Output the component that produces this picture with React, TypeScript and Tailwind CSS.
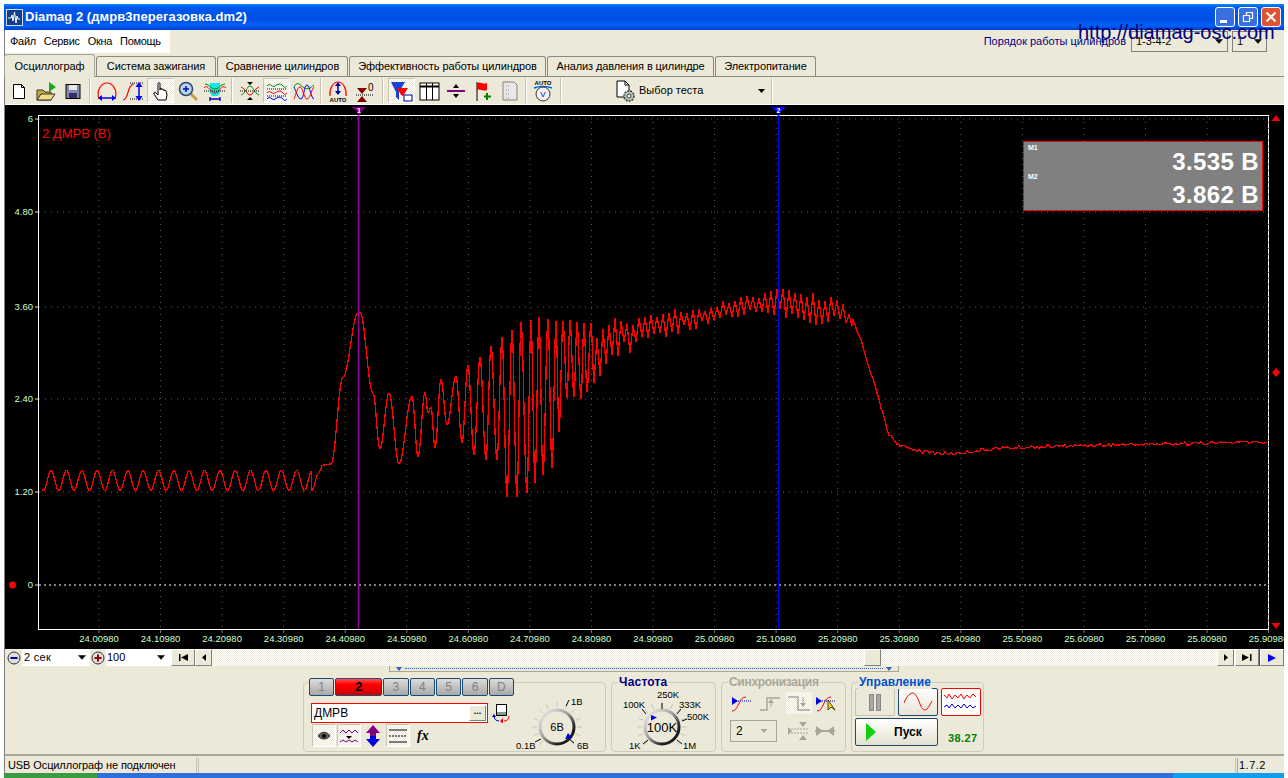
import React from 'react'

const tabs = ['Система зажигания', 'Сравнение цилиндров', 'Эффективность работы цилиндров', 'Анализ давления в цилиндре', 'Электропитание']
const tabWidths = ['w-[120px]', 'w-[131px]', 'w-[197px]', 'w-[167px]', 'w-[101px]']

// waveform extrema read off the screenshot, cosine-interpolated between them
const extrema: [number, number][] = [
  [312, 491], [318, 474], [323, 465], [331, 464], [343, 377], [358, 313], [360, 312], [373, 393], [380, 449], [389, 393], [399, 464], [412, 396],
  [418, 457], [425, 392], [428, 413], [431, 407], [435, 448], [441, 379], [447, 425], [456, 376], [462, 443], [468, 365],
  [474, 455], [480, 357], [486, 460], [491, 346], [497, 460], [502, 337], [507, 497], [512, 330], [517, 497], [521, 322],
  [527, 493], [531, 320], [535, 483], [539, 317], [543, 475], [548, 319], [552, 468], [556, 321], [559, 432], [563, 321],
  [567, 398], [570, 320], [574, 397], [577, 322], [581, 399], [584, 323], [587, 392], [591, 323], [594, 382],
]

const lerpTable = (table: [number, number][], x: number) => {
  for (let i = 1; i < table.length; i++) {
    if (x <= table[i][0]) {
      const [x0, y0] = table[i - 1]
      const [x1, y1] = table[i]
      return y0 + ((y1 - y0) * (x - x0)) / (x1 - x0)
    }
  }
  return table[table.length - 1][1]
}

const upper: [number, number][] = [[594, 323], [623, 313], [657, 312], [690, 307], [723, 300], [757, 293], [778, 288], [807, 292], [840, 298], [853, 320]]
const lower: [number, number][] = [[594, 383], [607, 370], [623, 357], [633, 355], [657, 340], [690, 333], [707, 328], [723, 320], [757, 315], [778, 317], [797, 322], [817, 327], [840, 320], [853, 328]]
const tail: [number, number][] = [[853, 320], [860, 337], [873, 380], [880, 403], [888, 433], [900, 446], [925, 452], [950, 454], [1000, 448], [1100, 445], [1268, 442]]

const noise = (i: number) => {
  const v = Math.sin(i * 12.9898) * 43758.5453
  return v - Math.floor(v)
}

const buildWave = () => {
  const pts: string[] = []
  for (let x = 42; x < 312; x += 1) {
    const y = 480.5 + 10 * Math.sin(((x - 42) / 15.35) * 2 * Math.PI + 1)
    pts.push(`${x},${y.toFixed(1)}`)
  }
  for (let i = 1; i < extrema.length; i++) {
    const [x0, y0] = extrema[i - 1]
    const [x1, y1] = extrema[i]
    for (let s = 0; s < x1 - x0; s++) {
      const t = s / (x1 - x0)
      const y = y0 + ((y1 - y0) * (1 - Math.cos(Math.PI * t))) / 2
      pts.push(`${x0 + s},${y.toFixed(1)}`)
    }
  }
  let flip = false
  let i = 0
  for (let x = 594; x < 853; x += 3) {
    const up = lerpTable(upper, x)
    const lo = lerpTable(lower, x)
    const r = noise(i++)
    const y = flip ? up + r * (lo - up) * 0.3 : lo - r * (lo - up) * 0.35
    pts.push(`${x},${y.toFixed(1)}`)
    flip = !flip
  }
  for (let x = 853; x < 1268; x += 2) {
    pts.push(`${x},${(lerpTable(tail, x) + (noise(i++) - 0.5) * 3.5).toFixed(1)}`)
  }
  return pts.join(' ')
}

const wave = buildWave()
const xTicks = Array.from({ length: 20 }, (_, k) => ({ x: 99 + 61.56 * k, label: (24.0098 + 0.1 * k).toFixed(5) }))
const yTicks = [{ y: 119, t: '6' }, { y: 212, t: '4.80' }, { y: 307, t: '3.60' }, { y: 399, t: '2.40' }, { y: 492, t: '1.20' }, { y: 585, t: '0' }]

function Scope() {
  return (
    <div className="relative h-[544px] bg-black overflow-hidden">
      <svg viewBox="5 105 1279 544" width={1279} height={544} className="block" style={{ fontFamily: '"Liberation Sans", sans-serif' }}>
        <rect x="38.5" y="115.5" width="1230" height="514" fill="none" stroke="#fff" />
        {yTicks.slice(1, 5).map((t) => (
          <line key={t.y} x1="39" x2="1268" y1={t.y} y2={t.y} stroke="#5c5c5c" strokeDasharray="1 5" />
        ))}
        <line x1="39" x2="1268" y1="119" y2="119" stroke="#5c5c5c" strokeDasharray="1 5" />
        {xTicks.map((t) => (
          <g key={t.label}>
            <line x1={t.x} x2={t.x} y1="116" y2="629" stroke="#5c5c5c" strokeDasharray="1 5" />
            <line x1={t.x} x2={t.x} y1="630" y2="633" stroke="#777" />
            <text x={t.x} y="642" textAnchor="middle" fontSize="9.5" fill="#ccffcc">{t.label}</text>
          </g>
        ))}
        {yTicks.map((t) => (
          <g key={t.y}>
            <text x="33" y={t.y + 3} textAnchor="end" fontSize="9.5" fill="#ccffcc">{t.t}</text>
            <line x1="35" x2="38" y1={t.y} y2={t.y} stroke="#ddd" />
          </g>
        ))}
        <line x1="39" x2="1268" y1="585" y2="585" stroke="#fff" strokeDasharray="2 3" />
        <circle cx="12.5" cy="585" r="3.5" fill="#ff0000" />
        <polyline points={wave} fill="none" stroke="#ff0000" strokeWidth="1.3" strokeLinejoin="bevel" shapeRendering="crispEdges" />
        <line x1="358.5" x2="358.5" y1="113" y2="629" stroke="#990099" strokeWidth="1.5" />
        <line x1="778.5" x2="778.5" y1="113" y2="629" stroke="#0000ff" strokeWidth="1.5" />
        <path d="M352 107h14l-7 7z" fill="#800080" />
        <text x="359" y="113" textAnchor="middle" fontSize="7" fontWeight="700" fill="#fff">1</text>
        <path d="M771 107h15l-7.5 7z" fill="#0000ff" />
        <text x="778.5" y="113" textAnchor="middle" fontSize="7" fontWeight="700" fill="#fff">2</text>
        <path d="M1276 115l4.5 6h-9z" fill="#ff0000" />
        <path d="M1276 368l4 4.5-4 4.5-4-4.5z" fill="#ff0000" />
        <path d="M1276 629l4.5-6h-9z" fill="#ff0000" />
        <text x="42" y="138" fontSize="13" fill="#ff0000">2 ДМРВ (В)</text>
      </svg>
      <div className="absolute left-[1018px] top-[36px] w-[240px] h-[70px] bg-[#808080] border border-[#ff0000] text-white font-['Liberation_Sans',sans-serif] pl-[4px] pr-[3px]">
        <div className="text-[7px] leading-[8px] font-bold mt-[2px]">M1</div>
        <div className="text-[24px] leading-[26px] text-right font-bold tracking-[0.4px] -mt-[3px]">3.535 В</div>
        <div className="text-[7px] leading-[8px] font-bold -mt-[2px]">M2</div>
        <div className="text-[24px] leading-[26px] text-right font-bold tracking-[0.4px] mt-[1px]">3.862 В</div>
      </div>
    </div>
  )
}

function Tool({ pressed, children }: { pressed?: boolean; children: React.ReactNode }) {
  return (
    <div className={`w-[27px] h-[25px] flex items-center justify-center ${pressed ? "bg-[repeating-conic-gradient(#ece9d8_0_25%,#ffffff_0_50%)] bg-[length:2px_2px] border border-t-[#c8c5b4] border-l-[#c8c5b4] border-r-white border-b-white" : ''}`}>
      {children}
    </div>
  )
}

function Sep({ className }: { className: string }) {
  return (
    <div className={`${className} h-[25px] flex justify-center`}>
      <div className="w-[2px] h-full bg-[#c5c2b2] border-r border-white" />
    </div>
  )
}

const Ico = ({ children, w = 24, h = 24 }: { children: React.ReactNode; w?: number; h?: number }) => (
  <svg viewBox={`0 0 ${w} ${h}`} width={w} height={h} fill="none" className="block shrink-0">{children}</svg>
)

function Toolbar() {
  return (
    <div className="h-[27px] flex items-center bg-[#ece9d8] font-['Liberation_Sans',sans-serif]">
      <Tool>
        <Ico><path d="M6.5 5.500h8l3 3v11h-11z" fill="#fff" stroke="#000" /><path d="M14.5 5.500v3h3" stroke="#000" /></Ico>
      </Tool>
      <Tool>
        <Ico><path d="M3 21V11h6l2 2h6v8z" fill="#c8a83a" stroke="#333" /><path d="M3 21l4-6h14l-4 6z" fill="#f4dc80" stroke="#333" /><path d="M15 3v10l7-5z" fill="#18a820" /></Ico>
      </Tool>
      <Tool>
        <Ico><rect x="5" y="5.500" width="14" height="14" fill="#8a8aa8" stroke="#000" /><rect x="8" y="6" width="8" height="5" fill="#e8e8e8" /><rect x="8" y="14" width="8" height="5" fill="#30306a" /></Ico>
      </Tool>
      <Sep className="w-[7px]" />
      <Tool>
        <Ico><path d="M4 20C1 12 6 4 12 4s11 8 8 16" stroke="#ff0000" strokeWidth="1.2" /><path d="M5 19h14" stroke="#0000ff" strokeWidth="1.5" /><path d="M3 19l4-3v6zM21 19l-4-3v6z" fill="#0000ff" /></Ico>
      </Tool>
      <Tool>
        <Ico><path d="M1 21c6 0 4-16 11-16" stroke="#ff0000" strokeWidth="1.2" /><path d="M8 4h13M8 20h13" stroke="#000" strokeDasharray="1 1" /><path d="M17 6v14" stroke="#0000ff" strokeWidth="1.5" /><path d="M17 3l-3.5 5h7zM17 22l-3.5-5h7z" fill="#0000ff" /></Ico>
      </Tool>
      <Tool pressed>
        <Ico><path d="M9 21l-4-6c-1-2 1-2 2-1l2 2V5c0-2 2-2 2 0v6-1c0-1 2-1 2 0v1c0-1 2-1 2 0v1c0-1 2-1 2 0l1 4-1 5z" fill="#fff" stroke="#000" /></Ico>
      </Tool>
      <Tool>
        <Ico><path d="M15 15l6 6" stroke="#c8a040" strokeWidth="3" /><circle cx="10" cy="10" r="6.5" fill="#b8d8f0" stroke="#304868" strokeWidth="1.5" /><path d="M7 10h6M10 7v6" stroke="#0000c0" strokeWidth="1.5" /></Ico>
      </Tool>
      <Tool>
        <Ico><path d="M7 4h10v10l-2 3H9l-2-3z" fill="#10e8e8" /><path d="M1 9c4-5 6 5 11 5s6-10 11-5" stroke="#ff0000" /><path d="M2 5c5 0 5 5 10 5s5-5 10-5" stroke="#009000" /><path d="M1 12h22" stroke="#000" strokeDasharray="1 1" /><path d="M7 20h10M7 18v4M17 18v4" stroke="#0000c0" strokeWidth="1.3" /></Ico>
      </Tool>
      <Sep className="w-[8px]" />
      <Tool>
        <Ico><path d="M3 8c5 2 6 8 9 8s4-6 9-8" stroke="#ff0000" /><path d="M3 16c5-2 6-9 9-9s4 7 9 9" stroke="#009000" /><path d="M2 12h20" stroke="#000" strokeDasharray="1 1" /><path d="M12 6l-3-3h6zM12 18l-3 3h6z" fill="#000" /></Ico>
      </Tool>
      <Tool pressed>
        <Ico><path d="M2 7c3-4 5 2 8 0s5-3 8 0 2 1 4 0" stroke="#009000" /><path d="M2 14c3-4 5 2 8 0s5-3 8 0 2 1 4 0" stroke="#ff0000" /><path d="M2 20c3-4 5 2 8 0s5-3 8 0 2 1 4 0" stroke="#0000ff" /><path d="M2 10h20M2 17h20" stroke="#000" strokeDasharray="1 1" /></Ico>
      </Tool>
      <Tool>
        <Ico><path d="M2 8c3-6 5-3 9 0s6 2 11-2" stroke="#009000" /><path d="M2 8c2 4 4 12 7 12s3-14 6-14 4 14 7 14" stroke="#0000ff" /><path d="M2 20c2-4 3-12 6-12s4 12 7 12 4-8 7-12" stroke="#ff0000" /></Ico>
      </Tool>
      <Sep className="w-[7px]" />
      <Tool>
        <Ico><path d="M4 17c-1-7 3-14 8-14s9 7 8 14" stroke="#ff0000" strokeWidth="1.2" /><path d="M12 5v9" stroke="#0000a0" strokeWidth="1.5" /><path d="M12 3l-3 4h6zM12 16l-3-4h6z" fill="#0000a0" /><text x="12" y="23" textAnchor="middle" fontSize="6" fontWeight="700" fill="#000">AUTO</text></Ico>
      </Tool>
      <Tool>
        <Ico><path d="M3 16h18" stroke="#000" strokeDasharray="1 1" /><path d="M9 15l-5-6h10zM9 17l-5 6h10z" fill="#800000" /><text x="15" y="12" fontSize="10" fill="#000">0</text></Ico>
      </Tool>
      <Sep className="w-[10px]" />
      <Tool pressed>
        <Ico><path d="M1 3h14l-6 10v8l-3-3v-5z" fill="#2040d0" /><path d="M7 9h11l-5 8-2-1z" fill="#ff0000" /><rect x="14" y="16" width="8" height="6" fill="#fff" stroke="#0000a0" /></Ico>
      </Tool>
      <Tool>
        <Ico><rect x="3" y="4" width="19" height="17" fill="#fff" stroke="#000" /><path d="M3 7.500h19" stroke="#000" strokeWidth="2" /><path d="M9.500 4v17M15.500 4v17" stroke="#000" /></Ico>
      </Tool>
      <Tool>
        <Ico><path d="M3 12h18" stroke="#800080" strokeWidth="2" /><path d="M12 5l-3 4h6zM12 19l-3-4h6z" fill="#000" /></Ico>
      </Tool>
      <Tool>
        <Ico><path d="M6 3v19" stroke="#000" /><path d="M6 4c3-2 6 2 10 0v7c-4 2-7-2-10 0z" fill="#ff0000" /><path d="M16 14v7M13 17.500h7" stroke="#008000" strokeWidth="2" /></Ico>
      </Tool>
      <Tool>
        <Ico><path d="M5 3h11l3 3v15H5z" fill="#e8e8e8" stroke="#808080" /><path d="M8 7h3M8 11h3M8 15h3M8 19h3" stroke="#909090" strokeDasharray="1 1" /></Ico>
      </Tool>
      <Sep className="w-[6px]" />
      <Tool>
        <Ico><text x="12" y="6" textAnchor="middle" fontSize="6" fontWeight="700" fill="#000">AUTO</text><path d="M3 9c5-2 13-2 18 0" stroke="#0060e0" strokeWidth="1.5" /><circle cx="12" cy="15" r="7" fill="#f0f0f0" stroke="#333" /><text x="12" y="18" textAnchor="middle" fontSize="8" fill="#0000c0">V</text></Ico>
      </Tool>
      <Sep className="w-[10px]" />
      <div className="w-[205px] flex items-center pl-[48px] pr-[6px]">
        <Ico><path d="M3 2h8l4 4v12H3z" fill="#fff" stroke="#000" /><path d="M11 2v4h4" stroke="#000" /><circle cx="15" cy="17" r="5" fill="#b8c8c0" stroke="#304030" strokeWidth="1.5" strokeDasharray="2 1" /><circle cx="15" cy="17" r="2" fill="#fff" stroke="#304030" /></Ico>
        <span className="text-[11px] ml-[1px] text-black">Выбор теста</span>
        <svg viewBox="0 0 7 4" width={7} height={4} className="ml-auto"><path d="M0 0h7L3.500 4z" fill="#000" /></svg>
      </div>
      <Sep className="w-[2px]" />
    </div>
  )
}

function Combo({ w, text }: { w: string; text: string }) {
  return (
    <div className={`${w} h-[21px] bg-[#ece9d8] border border-[#808080] flex items-center justify-between px-[4px] text-[11px] text-black`}>
      <span>{text}</span>
      <svg viewBox="0 0 7 4" width={8} height={5}><path d="M0 0h7L3.500 4z" fill="#000" /></svg>
    </div>
  )
}

function TitleBtn({ close, children }: { close?: boolean; children: React.ReactNode }) {
  return (
    <div className={`w-[20px] h-[20px] rounded-[3px] border border-white flex items-center justify-center ${close ? 'bg-[#e0532f]' : 'bg-[#3a6fe0]'}`}>
      {children}
    </div>
  )
}

function Header() {
  return (
    <div className="h-[26px] flex items-center bg-[linear-gradient(#0a8cf8_0,#0058ee_3px,#0050e4_60%,#0060f8_82%,#0040c8_100%)] pl-[2px] pr-[3px]">
      <svg viewBox="0 0 17 17" width={17} height={17}>
        <rect x="0.500" y="0.500" width="16" height="16" fill="#10408c" stroke="#d0d8f0" />
        <path d="M2 9h3l1-3 1 6 1.500-9 1.500 11 1-7 1 3h2" stroke="#fff" fill="none" />
      </svg>
      <span className="ml-[2px] text-[13px] font-bold text-white tracking-[0.05px]">Diamag 2 (дмрв3перегазовка.dm2)</span>
      <div className="ml-auto flex gap-[3px]">
        <TitleBtn><div className="w-[7px] h-[3px] bg-white mt-[8px] -ml-[3px]" /></TitleBtn>
        <TitleBtn>
          <svg viewBox="0 0 12 12" width={12} height={12}><path d="M1.500 4.500h6v6h-6zM4.500 4V1.500h6v6H8" fill="none" stroke="#fff" strokeWidth="1.2" /></svg>
        </TitleBtn>
        <TitleBtn close>
          <svg viewBox="0 0 12 12" width={12} height={12}><path d="M1.500 1.500l9 9M10.500 1.500l-9 9" stroke="#fff" strokeWidth="2" /></svg>
        </TitleBtn>
      </div>
    </div>
  )
}

function Menu() {
  return (
    <div className="h-[24px] flex justify-between items-start">
      <div className="w-[165px] h-[23px] bg-white flex items-center gap-[8px] pl-[5px] text-[11px] text-black tracking-[-0.3px]">
        <span>Файл</span><span>Сервис</span><span>Окна</span><span>Помощь</span>
      </div>
      <div className="flex items-center pr-[17px] pt-px">
        <span className="text-[11px] text-[#000080] mr-[5px]">Порядок работы цилиндров</span>
        <Combo w="w-[97px]" text="1-3-4-2" />
        <div className="w-[4px]" />
        <Combo w="w-[35px]" text="1" />
      </div>
    </div>
  )
}

function Tabs() {
  return (
    <div className="h-[23px] flex items-end border-b border-[#8c8a7e] text-[11px] text-black tracking-[-0.1px]">
      <div className="w-[91px] h-[23px] -ml-px -mb-px bg-[#ece9d8] border border-b-0 border-[#a8a698] rounded-t-[3px] flex items-center justify-center z-10">Осциллограф</div>
      {tabs.map((t, i) => (
        <div key={t} className={`${tabWidths[i]} h-[20px] ml-px bg-[#ece9d8] border border-b-0 border-[#8c8a7e] rounded-t-[3px] flex items-center justify-center`}>{t}</div>
      ))}
    </div>
  )
}

function NavBtn({ w, children }: { w: string; children: React.ReactNode }) {
  return (
    <div className={`${w} h-[17px] bg-[#ece9d8] border border-t-white border-l-white border-r-[#808080] border-b-[#808080] flex items-center justify-center shrink-0`}>{children}</div>
  )
}

function ScrollRow() {
  return (
    <div className="relative h-[17px] flex items-center bg-white text-[11px] text-black">
      <div className="w-[17px] h-[17px] bg-[#ece9d8] flex items-center justify-center shrink-0">
        <svg viewBox="0 0 14 14" width={14} height={14}><circle cx="7" cy="7" r="6" fill="#ddd" stroke="#333" /><path d="M3.500 7h7" stroke="#000090" strokeWidth="2" /></svg>
      </div>
      <div className="w-[68px] flex items-center justify-between pl-[2px] pr-[4px] shrink-0">
        <span className="tracking-[0.3px]">2 сек</span>
        <svg viewBox="0 0 7 4" width={8} height={5}><path d="M0 0h7L3.500 4z" fill="#000" /></svg>
      </div>
      <div className="w-[16px] h-[17px] bg-[#ece9d8] flex items-center justify-center shrink-0">
        <svg viewBox="0 0 14 14" width={14} height={14}><circle cx="7" cy="7" r="6" fill="#ddd" stroke="#333" /><path d="M3.500 7h7M7 3.500v7" stroke="#a00000" strokeWidth="2" /></svg>
      </div>
      <div className="w-[65px] flex items-center justify-between pl-[1px] pr-[6px] shrink-0">
        <span>100</span>
        <svg viewBox="0 0 7 4" width={8} height={5}><path d="M0 0h7L3.500 4z" fill="#000" /></svg>
      </div>
      <NavBtn w="w-[24px]"><svg viewBox="0 0 9 7" width={9} height={7}><path d="M0 0h1.500v7H0zM9 0v7L2 3.500z" fill="#000" /></svg></NavBtn>
      <NavBtn w="w-[17px]"><svg viewBox="0 0 4 7" width={4} height={7}><path d="M4 0v7L0 3.500z" fill="#000" /></svg></NavBtn>
      <div className="flex-1 h-[17px] bg-[repeating-conic-gradient(#ece9d8_0_25%,#ffffff_0_50%)] bg-[length:2px_2px]" />
      <NavBtn w="w-[17px]"><svg viewBox="0 0 4 7" width={4} height={7}><path d="M0 0v7l4-3.500z" fill="#000" /></svg></NavBtn>
      <div className="w-px" />
      <NavBtn w="w-[24px]"><svg viewBox="0 0 10 7" width={10} height={7}><path d="M0 0v7l7-3.500zM8 0h1.500v7H8z" fill="#000" /></svg></NavBtn>
      <div className="w-px h-full bg-[#0050e0]" />
      <NavBtn w="w-[24px]"><svg viewBox="0 0 8 8" width={8} height={8}><path d="M0 0v8l8-4z" fill="#0000ff" /></svg></NavBtn>
      <div className="absolute left-[859px] top-0 w-[17px] h-[17px] bg-[#ece9d8] border border-t-white border-l-white border-r-[#808080] border-b-[#808080]" />
    </div>
  )
}

function Group({ w, title, titleClass, children }: { w: string; title?: string; titleClass?: string; children: React.ReactNode }) {
  return (
    <div className={`${w} relative h-[75px] pt-[5px] shrink-0`}>
      <div className="h-[70px] border border-[#cfccbc] rounded-[4px]">{children}</div>
      {title && <span className={`absolute left-[7px] -top-px bg-[#ece9d8] px-px text-[12px] leading-[13px] font-bold ${titleClass}`}>{title}</span>}
    </div>
  )
}

function ChanBtn({ label, active }: { label: string; active?: boolean }) {
  return (
    <div className={`h-[18px] border border-[#1c4a70] rounded-[2px] flex items-center justify-center ${active ? "w-[48px] bg-[linear-gradient(#ff5050,#ff0000_35%,#c80000)] text-black font-bold text-[13px]" : "w-[26px] bg-[linear-gradient(#dcdcdc,#a8a8a8)] text-[#808080] text-[12px]"}`}>
      {label}
    </div>
  )
}

function Knob({ vb, cx, cy, r, ticks, children }: { vb: string; cx: number; cy: number; r: number; ticks: number[]; children: React.ReactNode }) {
  const [, , w, h] = vb.split(' ').map(Number)
  const id = `k${cx}`
  return (
    <svg viewBox={vb} width={w} height={h} className="block shrink-0" style={{ fontFamily: '"Liberation Sans", sans-serif' }}>
      <defs>
        <linearGradient id={id} x1="0" y1="0" x2="1" y2="1">
          <stop offset="0" stopColor="#f4f4f4" />
          <stop offset="0.45" stopColor="#a0a0a0" />
          <stop offset="0.75" stopColor="#222" />
          <stop offset="1" stopColor="#111" />
        </linearGradient>
      </defs>
      {ticks.map((a) => {
        const rad = (a * Math.PI) / 180
        return (
          <line key={a} x1={cx + Math.cos(rad) * (r + 3)} y1={cy + Math.sin(rad) * (r + 3)} x2={cx + Math.cos(rad) * (r + 8)} y2={cy + Math.sin(rad) * (r + 8)} stroke="#c8c5b8" />
        )
      })}
      <circle cx={cx} cy={cy} r={r} fill="#ece9d8" stroke={`url(#${id})`} strokeWidth="3" />
      {children}
    </svg>
  )
}

const gridTicks = [-225, -200, -180, -160, -135, -115, -90, -65, -45, -20, 0, 20, 45, 135]

function Controls() {
  return (
    <div className="h-[88px] bg-[#ece9d8] font-['Liberation_Sans',sans-serif]">
      <div className="ml-[384px] w-[510px] h-[6px] bg-[#ece9d8] border border-t-0 border-[#a8a698] flex items-center justify-between px-[6px]">
        <svg viewBox="0 0 6 4" width={6} height={4}><path d="M0 0h6L3 4z" fill="#3060c0" /></svg>
        <div className="flex-1 mx-[3px] border-t border-dotted border-[#3060c0]" />
        <svg viewBox="0 0 6 4" width={6} height={4}><path d="M0 0h6L3 4z" fill="#3060c0" /></svg>
      </div>
      <div className="mt-[5px] ml-[298px] flex gap-[5px]">
        <Group w="w-[303px]">
          <div className="flex">
            <div className="w-[210px] shrink-0 pl-[5px] -mt-[5px]">
              <div className="flex gap-px items-center">
                <ChanBtn label="1" />
                <ChanBtn label="2" active />
                <ChanBtn label="3" />
                <ChanBtn label="4" />
                <ChanBtn label="5" />
                <ChanBtn label="6" />
                <ChanBtn label="D" />
              </div>
              <div className="flex items-center mt-[7px] ml-[2px]">
                <div className="w-[177px] h-[20px] bg-white border border-[#ff0000] flex items-center justify-between pl-[2px] pr-[1px] text-[12px] text-black">
                  ДМРВ
                  <div className="w-[17px] h-[16px] bg-[#ece9d8] border border-t-white border-l-white border-r-[#808080] border-b-[#808080] flex items-center justify-center text-[9px] font-bold leading-none pb-[3px]">...</div>
                </div>
                <svg viewBox="0 0 20 20" width={20} height={20} className="ml-[3px]">
                  <rect x="5.500" y="1.500" width="10" height="11" fill="#fff" stroke="#000" />
                  <rect x="6" y="9" width="9" height="3" fill="#80a080" />
                  <path d="M3 13c0 3 2 5 5 5" fill="none" stroke="#0000c0" />
                  <path d="M18 13c0 3-2 5-5 5" fill="none" stroke="#ff0000" />
                  <path d="M1 14h4l-2-3z" fill="#0000c0" /><path d="M12 15v6l-3-3z" fill="#ff0000" />
                </svg>
              </div>
              <div className="flex items-center mt-[1px] ml-[3px]">
                <div className="w-[24px] h-[23px] bg-[repeating-conic-gradient(#ece9d8_0_25%,#ffffff_0_50%)] bg-[length:2px_2px] border border-t-[#c8c5b4] border-l-[#c8c5b4] border-r-white border-b-white flex items-center justify-center">
                  <svg viewBox="0 0 14 10" width={14} height={10}><path d="M1 5c3-5 9-5 12 0-3 4-9 4-12 0z" fill="#606060" stroke="#333" /><circle cx="7" cy="5" r="2" fill="#000" /></svg>
                </div>
                <div className="w-[24px] h-[23px] ml-px bg-[repeating-conic-gradient(#ece9d8_0_25%,#ffffff_0_50%)] bg-[length:2px_2px] border border-t-[#c8c5b4] border-l-[#c8c5b4] border-r-white border-b-white flex items-center justify-center">
                  <svg viewBox="0 0 20 18" width={20} height={18}><path d="M1 6l3-3 3 3 3-3 3 3 3-3 3 3M1 15l3-2 3 2 3-2 3 2 3-2 3 2" fill="none" stroke="#800080" /><path d="M7 9h6l-3 3z" fill="#000" /></svg>
                </div>
                <svg viewBox="0 0 16 22" width={16} height={22} className="ml-[4px]"><path d="M8 0l7 8h-4v3H5V8H1z" fill="#800080" /><path d="M8 22l7-8h-4v-3H5v3H1z" fill="#0000e0" /></svg>
                <div className="w-[24px] h-[23px] ml-[5px] bg-[repeating-conic-gradient(#ece9d8_0_25%,#ffffff_0_50%)] bg-[length:2px_2px] border border-t-[#c8c5b4] border-l-[#c8c5b4] border-r-white border-b-white flex items-center justify-center">
                  <svg viewBox="0 0 20 14" width={20} height={14}><path d="M1 1h18M1 13h18" stroke="#000" /><path d="M1 7h18" stroke="#000" strokeDasharray="2 1" /></svg>
                </div>
                <span className="ml-[7px] text-[14px] font-bold italic font-['Liberation_Serif',serif] text-black">fx</span>
              </div>
            </div>
            <div className="ml-[1px] mt-[8px]">
              <Knob vb="515 691 78 60" cx={557} cy={727} r={17} ticks={gridTicks}>
                <path d="M569 700l-3 6M574 743l-5-4M535 742l6-3" stroke="#000" />
                <path d="M565 739l7-1-4-5z" fill="#0000e0" />
                <text x="557" y="731" textAnchor="middle" fontSize="11" fill="#000">6В</text>
                <text x="571" y="705" fontSize="9.5" fill="#000">1В</text>
                <text x="516" y="749" fontSize="9.5" fill="#000">0.1В</text>
                <text x="577" y="749" fontSize="9.5" fill="#000">6В</text>
              </Knob>
            </div>
          </div>
        </Group>
        <Group w="w-[105px]" title="Частота" titleClass="text-[#000080] tracking-[0.2px]">
          <div className="pl-[5px] pt-[5px]">
            <Knob vb="617 688 96 64" cx={662} cy={727} r={17} ticks={gridTicks}>
              <path d="M662 709l0-6M646 714l-4-5M677 714l4-5M682 721l5-2M648 740l-5 4M677 740l5 4" stroke="#000" />
              <path d="M651 715l6 2.5-6 3z" fill="#0000e0" />
              <text x="662" y="732" textAnchor="middle" fontSize="13" fill="#000">100K</text>
              <text x="657" y="698" fontSize="9.5" fill="#000">250K</text>
              <text x="623" y="708" fontSize="9.5" fill="#000">100K</text>
              <text x="679" y="708" fontSize="9.5" fill="#000">333K</text>
              <text x="687" y="720" fontSize="9.5" fill="#000">500K</text>
              <text x="629" y="749" fontSize="9.5" fill="#000">1K</text>
              <text x="683" y="749" fontSize="9.5" fill="#000">1M</text>
            </Knob>
          </div>
        </Group>
        <Group w="w-[125px]" title="Синхронизация" titleClass="text-[#a8a698] tracking-[-0.3px]">
          <div className="pl-[8px] pt-[9px]">
            <div className="flex items-center gap-[2px]">
              <Ico w={26} h={22}><path d="M2 19c7 0 6-14 14-14" stroke="#ff0000" /><path d="M6 9h16" stroke="#0000c0" strokeDasharray="1 1" /><path d="M2 5l6 4-6 4z" fill="#0000e0" /></Ico>
              <Ico w={26} h={22}><path d="M2 18h7V6h13" stroke="#a8a698" strokeWidth="1.5" /><path d="M13 15V9" stroke="#a8a698" /><path d="M13 7l-3 4h6z" fill="#a8a698" /></Ico>
              <div className="w-[26px] h-[22px] bg-[repeating-conic-gradient(#ece9d8_0_25%,#ffffff_0_50%)] bg-[length:2px_2px]">
                <Ico w={26} h={22}><path d="M2 5h10v13h12" stroke="#a8a698" strokeWidth="1.5" /><path d="M17 5v8" stroke="#a8a698" /><path d="M17 15l-3-4h6z" fill="#a8a698" /></Ico>
              </div>
              <Ico w={26} h={22}><path d="M3 19c7 0 6-14 14-14" stroke="#ff0000" /><path d="M6 9h16" stroke="#0000c0" strokeDasharray="1 1" /><path d="M2 5l6 4-6 4z" fill="#0000e0" /><path d="M14 8v10l3-3 4 3z" fill="#ffe000" stroke="#000" strokeWidth="0.7" /></Ico>
            </div>
            <div className="flex items-center mt-[6px]">
              <div className="w-[47px] h-[22px] border border-[#a8a698] flex items-center justify-between pl-[5px] pr-[8px] text-[12px] text-black">
                2
                <svg viewBox="0 0 7 4" width={8} height={4}><path d="M0 0h7L3.500 4z" fill="#a8a698" /></svg>
              </div>
              <svg viewBox="0 0 24 22" width={24} height={22} className="ml-[9px]"><path d="M2 9h20M2 13h20" stroke="#a8a698" strokeDasharray="2 1" /><path d="M13 2h8l-4 5zM13 20h8l-4-5zM2 7l4 4-4 4z" fill="#a8a698" /></svg>
              <svg viewBox="0 0 22 14" width={22} height={14} className="ml-[4px]"><path d="M1 7h20" stroke="#a8a698" strokeWidth="2" /><path d="M2 2l7 5-7 5zM20 2l-7 5 7 5z" fill="#a8a698" /></svg>
            </div>
          </div>
        </Group>
        <Group w="w-[133px]" title="Управление" titleClass="text-[#0050d0] tracking-[0.1px]">
          <div className="pl-[3px] pt-[5px]">
            <div className="flex gap-[3px]">
              <div className="w-[40px] h-[28px] border border-[#c8c5b4] rounded-[2px] flex items-center justify-center gap-[2px]">
                <div className="w-[5px] h-[17px] bg-[#a8a8a8] border border-[#888]" />
                <div className="w-[5px] h-[17px] bg-[#a8a8a8] border border-[#888]" />
              </div>
              <div className="w-[40px] h-[28px] border border-[#1c4a70] rounded-[2px] bg-[linear-gradient(#ffffff,#e8e4d4)] flex items-center justify-center">
                <svg viewBox="0 0 30 22" width={30} height={22}><path d="M1 12C4 4 8 2 10 2s5 5 7 11 5 7 7 5 4-6 5-8" fill="none" stroke="#ff0000" /></svg>
              </div>
              <div className="w-[40px] h-[28px] border border-[#ff0000] rounded-[2px] bg-white flex items-center justify-center">
                <svg viewBox="0 0 36 24" width={36} height={24}><path d="M1 5l3 3 2-4 3 5 3-4 3 3 3-4 3 5 3-4 3 3 3-4 3 3" fill="none" stroke="#ff0000" /><path d="M1 17l3-2 2 3 3-4 3 4 3-3 3 3 3-4 3 4 3-3 3 3 3-2" fill="none" stroke="#0000e0" /></svg>
              </div>
            </div>
            <div className="flex items-center mt-[2px]">
              <div className="w-[83px] h-[28px] border border-[#1c4a70] rounded-[2px] bg-[linear-gradient(#ffffff,#e4e0d0)] flex items-center pl-[10px]">
                <svg viewBox="0 0 10 18" width={10} height={18}><path d="M0 0l10 9-10 9z" fill="#10d010" /></svg>
                <span className="ml-[18px] text-[12px] font-bold text-black">Пуск</span>
              </div>
              <span className="ml-[10px] mt-[13px] text-[11px] leading-[13px] font-bold text-[#008000] tracking-[0.4px]">38.27</span>
            </div>
          </div>
        </Group>
      </div>
    </div>
  )
}

function StatusBar() {
  return (
    <div className="h-[19px] border-t-2 border-[#a8a698] pt-[2px] flex gap-px text-[11px] text-black bg-[#ece9d8]">
      <div className="w-[192px] h-[15px] border-r border-[#c5c2b2] pl-[3px] leading-[15px] tracking-[-0.1px]">USB Осциллограф не подключен</div>
      <div className="flex-1 h-[15px] border-x border-[#c5c2b2]" />
      <div className="w-[47px] h-[15px] border-l border-[#a8a698] pl-px leading-[15px] tracking-[0.5px]">1.7.2</div>
    </div>
  )
}

export default function App() {
  return (
    <div className="w-[1288px] h-[778px] bg-white overflow-hidden pt-[4px] pl-[4px] font-['Liberation_Sans',sans-serif]">
      <div className="relative w-[1280px] h-[774px] bg-[#ece9d8]">
        <Header />
        <div className="border-l border-[#808080]">
          <Menu />
          <Tabs />
          <Toolbar />
          <div className="h-px bg-white" />
          <Scope />
          <ScrollRow />
          <Controls />
          <StatusBar />
        </div>
        <div className="h-[5px] flex">
          <div className="w-[93px] bg-[#3c9a42]" />
          <div className="flex-1 bg-[#2f6fdc]" />
          <div className="w-[111px] bg-[#0f9fec]" />
        </div>
        <span className="absolute left-[1074px] top-[16px] text-[20px] leading-[24px] text-[#000080]">http://diamag-osc.com</span>
      </div>
    </div>
  )
}
